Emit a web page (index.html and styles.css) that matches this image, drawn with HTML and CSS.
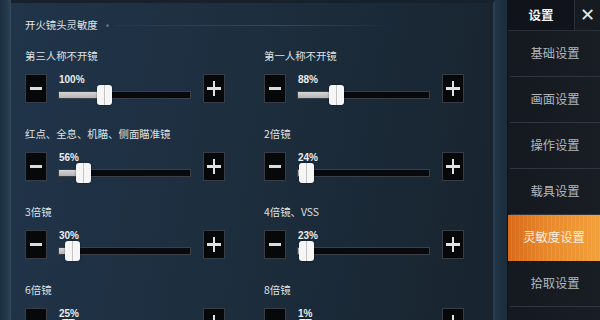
FILE: index.html
```html
<!DOCTYPE html>
<html lang="zh">
<head>
<meta charset="utf-8">
<link rel="stylesheet" href="styles.css">
</head>
<body>
<div class="screen">
  <div class="edge"></div>
  <main class="panel">
    <div class="title-row"><span class="title">开火镜头灵敏度</span><span class="dot"></span><span class="rule"></span></div>
    <div class="grid">
      <div class="item">
        <div class="label">第三人称不开镜</div>
        <div class="ctrl">
          <div class="btn minus"></div>
          <div class="slider"><div class="pct">100%</div><div class="track"><div class="fill" style="width:45px"></div><div class="thumb" style="left:38px"></div></div></div>
          <div class="btn plus"></div>
        </div>
      </div>
      <div class="item">
        <div class="label">第一人称不开镜</div>
        <div class="ctrl">
          <div class="btn minus"></div>
          <div class="slider"><div class="pct">88%</div><div class="track"><div class="fill" style="width:38px"></div><div class="thumb" style="left:31px"></div></div></div>
          <div class="btn plus"></div>
        </div>
      </div>
      <div class="item">
        <div class="label">红点、全息、机瞄、侧面瞄准镜</div>
        <div class="ctrl">
          <div class="btn minus"></div>
          <div class="slider"><div class="pct">56%</div><div class="track"><div class="fill" style="width:24px"></div><div class="thumb" style="left:17px"></div></div></div>
          <div class="btn plus"></div>
        </div>
      </div>
      <div class="item">
        <div class="label">2倍镜</div>
        <div class="ctrl">
          <div class="btn minus"></div>
          <div class="slider"><div class="pct">24%</div><div class="track"><div class="fill" style="width:8px"></div><div class="thumb" style="left:1px"></div></div></div>
          <div class="btn plus"></div>
        </div>
      </div>
      <div class="item">
        <div class="label">3倍镜</div>
        <div class="ctrl">
          <div class="btn minus"></div>
          <div class="slider"><div class="pct">30%</div><div class="track"><div class="fill" style="width:13px"></div><div class="thumb" style="left:6px"></div></div></div>
          <div class="btn plus"></div>
        </div>
      </div>
      <div class="item">
        <div class="label">4倍镜、VSS</div>
        <div class="ctrl">
          <div class="btn minus"></div>
          <div class="slider"><div class="pct">23%</div><div class="track"><div class="fill" style="width:8px"></div><div class="thumb" style="left:1px"></div></div></div>
          <div class="btn plus"></div>
        </div>
      </div>
      <div class="item">
        <div class="label">6倍镜</div>
        <div class="ctrl">
          <div class="btn minus"></div>
          <div class="slider"><div class="pct">25%</div><div class="track"><div class="fill" style="width:9px"></div><div class="thumb" style="left:2px"></div></div></div>
          <div class="btn plus"></div>
        </div>
      </div>
      <div class="item">
        <div class="label">8倍镜</div>
        <div class="ctrl">
          <div class="btn minus"></div>
          <div class="slider"><div class="pct">1%</div><div class="track"><div class="fill" style="width:7px"></div><div class="thumb" style="left:0px"></div></div></div>
          <div class="btn plus"></div>
        </div>
      </div>
    </div>
  </main>
  <div class="gap"></div>
  <aside class="side">
    <div class="side-head">
      <div class="side-title">设置</div>
      <div class="close">✕</div>
    </div>
    <nav class="menu">
      <div class="mi">基础设置</div>
      <div class="mi">画面设置</div>
      <div class="mi">操作设置</div>
      <div class="mi">载具设置</div>
      <div class="mi active">灵敏度设置</div>
      <div class="mi">拾取设置</div>
    </nav>
  </aside>
</div>
</body>
</html>
```

FILE: styles.css
```css
html, body {
  margin: 0;
  padding: 0;
  background: #141b22;
}
body {
  width: 600px;
  height: 320px;
  overflow: hidden;
  font-family: "Noto Sans CJK SC", "Noto Sans", sans-serif;
}
.screen {
  display: flex;
  width: 600px;
  height: 320px;
}
.edge {
  width: 10px;
  flex: none;
  background: linear-gradient(90deg, #1a2e3e, #24394b 70%, #2c4255);
  border-right: 1px solid #324a5c;
}
.panel {
  width: 468px;
  flex: none;
  padding-left: 14px;
  background: linear-gradient(100deg, #20344a 0%, #1d2e3e 45%, #18242f 100%);
  border-right: 2px solid #2a3e50;
  border-top: 3px solid #16212b;
  box-sizing: content-box;
  overflow: hidden;
}
.title-row {
  display: flex;
  align-items: center;
  height: 16px;
  margin-top: 14px;
}
.title {
  font-size: 10.4px;
  color: #dfe4e8;
  line-height: 16px;
}
.dot {
  width: 3px;
  height: 3px;
  border-radius: 50%;
  background: #5c6c78;
  margin-left: 8px;
}
.rule {
  flex: 1;
  height: 1px;
  margin-left: 6px;
  margin-right: 100px;
  background: linear-gradient(90deg, rgba(120,140,155,0.05), rgba(120,140,155,0.3) 60%, rgba(120,140,155,0));
}
.grid {
  display: grid;
  grid-template-columns: 200px 200px;
  column-gap: 39px;
  row-gap: 23px;
  margin-top: 15px;
}
.label {
  font-size: 10.4px;
  line-height: 16px;
  height: 16px;
  color: #dde2e6;
  white-space: nowrap;
}
.ctrl {
  display: flex;
  align-items: flex-start;
  margin-top: 10px;
  height: 29px;
}
.btn {
  width: 20px;
  height: 27px;
  flex: none;
  background: #06080a;
  border: 1px solid #363d45;
  position: relative;
}
.minus::before {
  content: "";
  position: absolute;
  left: 4px;
  top: 12px;
  width: 12px;
  height: 2.5px;
  background: #dcdcdc;
}
.plus::before, .plus::after {
  content: "";
  position: absolute;
  background: #e2e2e2;
}
.plus::before {
  left: 3px;
  top: 12px;
  width: 14px;
  height: 2.5px;
}
.plus::after {
  left: 8.75px;
  top: 6px;
  width: 2.5px;
  height: 15px;
}
.slider {
  width: 133px;
  margin: 0 12px 0 11px;
  flex: none;
}
.pct {
  font-family: "Liberation Sans", "Noto Sans", sans-serif;
  font-weight: bold;
  font-size: 10px;
  line-height: 12px;
  height: 12px;
  color: #e8ecee;
  margin-top: 0;
  padding-left: 1px;
}
.track {
  position: relative;
  margin-top: 5px;
  height: 6px;
  border: 1px solid #3a4046;
  background: #07090c;
}
.fill {
  height: 100%;
  background: linear-gradient(180deg, #d6d6d6, #b4b4b4);
}
.thumb {
  position: absolute;
  top: -7px;
  width: 15px;
  height: 20px;
  border-radius: 3px;
  background: repeating-linear-gradient(90deg, transparent 0 7px, #c4c4c4 7px 8px, transparent 8px 10px), #f6f6f6;
  box-shadow: 0 0 2px rgba(0,0,0,0.6);
}
.gap {
  width: 12px;
  flex: none;
  background: linear-gradient(90deg, #203548, #1b2d3d);
  border-right: 1px solid #101419;
}
.side {
  flex: 1;
  background: linear-gradient(90deg, #14191f, #191e25);
  display: flex;
  flex-direction: column;
}
.side-head {
  display: flex;
  height: 30px;
  border-bottom: 1px solid #2a3038;
}
.side-title {
  width: 66px;
  background: #10141a;
  color: #f2f2f2;
  font-size: 12.5px;
  font-weight: bold;
  text-align: center;
  line-height: 30px;
}
.close {
  flex: 1;
  border-left: 1px solid #2a3038;
  color: #e8e8e8;
  font-family: "DejaVu Sans", sans-serif;
  font-size: 18px;
  line-height: 30px;
  text-align: center;
  background: #161b21;
}
.menu {
  display: flex;
  flex-direction: column;
}
.mi {
  height: 45px;
  line-height: 45px;
  text-align: center;
  font-size: 12.3px;
  color: #b3b6ba;
  border-bottom: 1px solid #30363e;
  margin-left: 2px;
}
.mi.active {
  margin-left: 0;
  color: #fff1e0;
  border-bottom-color: transparent;
  background:
    repeating-linear-gradient(90deg, rgba(255,255,255,0) 0 3px, rgba(255,230,180,0.10) 3px 4px),
    linear-gradient(90deg, #d86a1a 0%, #e98a2d 45%, #f2a03a 100%);
  font-size: 12.3px;
}
```
